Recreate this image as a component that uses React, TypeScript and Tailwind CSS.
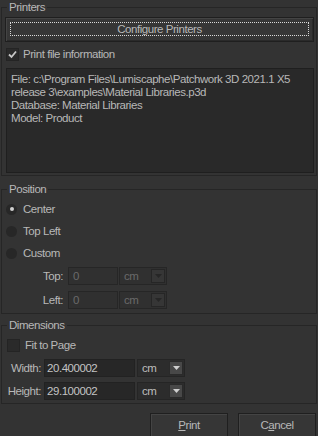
import React from "react";

function Check({ checked }: { checked?: boolean }) {
  return (
    <span className="w-[13px] h-[13px] bg-[#2a2a2a] border border-[#242424] flex items-center justify-center shrink-0">
      {checked && (
        <svg width="9" height="9" viewBox="0 0 9 9">
          <path d="M1 4.5 L3.5 7 L8 1.5" stroke="#c8c8c8" strokeWidth="1.8" fill="none" />
        </svg>
      )}
    </span>
  );
}

function Radio({ checked }: { checked?: boolean }) {
  return (
    <span className="w-[11px] h-[11px] rounded-full bg-[#272727] flex items-center justify-center shrink-0">
      {checked && <span className="w-[4px] h-[4px] rounded-full bg-[#cfcfcf]" />}
    </span>
  );
}

function Combo({ disabled }: { disabled?: boolean }) {
  return (
    <div
      className={
        "w-[48px] h-[18px] flex items-center border " +
        (disabled ? "border-[#262626] bg-[#303030] text-[#6a6a6a]" : "border-[#252525] bg-[#2c2c2c] text-[#bdbdbd]")
      }
    >
      <span className="flex-1 pl-[4px] leading-none pt-[2px]">cm</span>
      <span
        className={
          "w-[14px] h-[14px] mr-px flex items-center justify-center border " +
          (disabled ? "border-[#262626] bg-[#363636]" : "border-[#2a2a2a] bg-[#484848]")
        }
      >
        <svg width="7" height="4" viewBox="0 0 7 4">
          <path d="M0 0 H7 L3.5 4 Z" fill={disabled ? "#262626" : "#d0d0d0"} />
        </svg>
      </span>
    </div>
  );
}

function GroupTitle({ children }: { children: React.ReactNode }) {
  return (
    <span className="absolute -top-[8px] left-[5px] px-[2px] bg-[#333333] leading-[14px]">{children}</span>
  );
}

export default function App() {
  return (
    <div
      className="w-[318px] h-[436px] bg-[#333333] text-[#b8b8b8] text-[11.5px] tracking-[-0.45px] leading-[13px] overflow-hidden flow-root"
      style={{ fontFamily: '"Liberation Sans", Arial, sans-serif' }}
    >
      <section className="relative mx-px mt-[7px] border border-[#262626] pl-[3px] pr-[2px] pt-[9px] pb-[2px]">
        <GroupTitle>Printers</GroupTitle>
        <div className="h-[25px] relative bg-[#363636] border border-[#1f1f1f] shadow-[inset_1px_1px_0_#444,inset_-1px_-1px_0_#2a2a2a] flex items-center justify-center">
          <span className="absolute left-[4px] right-[4px] top-[4px] bottom-[5px] border border-dotted border-[#d8d8d8]" />
          <span className="relative">Configure Printers</span>
        </div>
        <div className="h-[13px] mt-[6px] flex items-center gap-[4px] ml-px">
          <Check checked />
          <span>Print file information</span>
        </div>
        <div className="mt-[7px] ml-px h-[105px] bg-[#292929] border border-[#1f1f1f] px-[4px] pt-[4px] leading-[13px]">
          <div className="whitespace-nowrap">File: c:\Program Files\Lumiscaphe\Patchwork 3D 2021.1 X5</div>
          <div>release 3\examples\Material Libraries.p3d</div>
          <div>Database: Material Libraries</div>
          <div>Model: Product</div>
        </div>
      </section>

      <section className="relative mx-px mt-[13px] border border-[#262626] pl-[4px] pt-[8px] pb-[4px]">
        <GroupTitle>Position</GroupTitle>
        <div className="h-[22px] flex items-center gap-[6px]">
          <Radio checked />
          <span>Center</span>
        </div>
        <div className="h-[22px] flex items-center gap-[6px]">
          <Radio />
          <span>Top Left</span>
        </div>
        <div className="h-[22px] flex items-center gap-[6px]">
          <Radio />
          <span>Custom</span>
        </div>
        <div className="flex items-center mt-[3px] h-[18px]">
          <span className="w-[58px] text-right pr-[1px]">Top:</span>
          <div className="ml-[4px] w-[50px] h-[18px] border border-[#262626] bg-[#303030] text-[#6a6a6a] pl-[4px] flex items-center">0</div>
          <div className="ml-px"><Combo disabled /></div>
        </div>
        <div className="flex items-center mt-[6px] h-[18px]">
          <span className="w-[58px] text-right pr-[1px]">Left:</span>
          <div className="ml-[4px] w-[50px] h-[18px] border border-[#262626] bg-[#303030] text-[#6a6a6a] pl-[4px] flex items-center">0</div>
          <div className="ml-px"><Combo disabled /></div>
        </div>
      </section>

      <section className="relative mx-px mt-[11px] border border-[#262626] pl-[4px] pt-[13px] pb-[3px]">
        <GroupTitle>Dimensions</GroupTitle>
        <div className="h-[13px] flex items-center gap-[5px] ml-px">
          <Check />
          <span>Fit to Page</span>
        </div>
        <div className="flex items-center mt-[7px] h-[18px]">
          <span className="w-[35px] text-right">Width:</span>
          <div className="ml-[3px] w-[91px] h-[18px] border border-[#222] bg-[#272727] text-[#c4c4c4] pl-[2px] flex items-center">20.400002</div>
          <div className="ml-[2px]"><Combo /></div>
        </div>
        <div className="flex items-center mt-[5px] h-[18px]">
          <span className="w-[35px] text-right">Height:</span>
          <div className="ml-[3px] w-[91px] h-[18px] border border-[#222] bg-[#272727] text-[#c4c4c4] pl-[2px] flex items-center">29.100002</div>
          <div className="ml-[2px]"><Combo /></div>
        </div>
      </section>

      <div className="flex justify-end gap-[10px] pr-[2px] mt-[9px]">
        <div className="w-[78px] h-[24px] bg-[#363636] border border-[#1f1f1f] shadow-[inset_1px_1px_0_#444] flex items-center justify-center">
          <span><span className="underline">P</span>rint</span>
        </div>
        <div className="w-[78px] h-[24px] bg-[#363636] border border-[#1f1f1f] shadow-[inset_1px_1px_0_#444] flex items-center justify-center">
          <span>C<span className="underline">a</span>ncel</span>
        </div>
      </div>
    </div>
  );
}
